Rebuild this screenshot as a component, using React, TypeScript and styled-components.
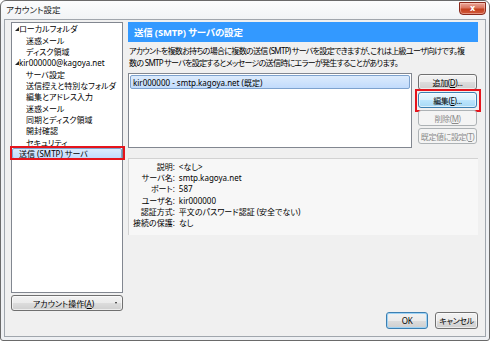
import React from "react";
import styled, { createGlobalStyle, css } from "styled-components";

const GlobalStyle = createGlobalStyle`
  html, body { margin: 0; padding: 0; background: #ffffff; }
  body {
    font-family: "Noto Sans", "Noto Sans CJK JP", sans-serif;
    font-size: 8px;
    font-feature-settings: "palt";
    color: #000;
  }
  * { box-sizing: border-box; }
`;

const Window = styled.div`
  width: 490px;
  height: 341px;
  border: 1px solid #6a6a6a;
  border-radius: 6px 6px 3px 3px;
  background: linear-gradient(#fbfcfd, #eef0f3 24px, #eef0f3);
  display: flex;
  flex-direction: column;
`;

const TitleBar = styled.div`
  height: 18px;
  display: flex;
  align-items: flex-start;
  padding: 0 3px 0 5px;
`;

const Title = styled.div`
  flex: 1;
  margin-top: 3px;
  font-size: 8.5px;
  line-height: 11px;
  color: #1a1a1a;
`;

const CloseButton = styled.div`
  width: 27px;
  height: 13px;
  margin-top: 1px;
  border: 1px solid #8a2a1c;
  border-radius: 0 0 4px 4px;
  background: linear-gradient(#eca799 0%, #d9745f 45%, #c4401f 55%, #d25a3c 100%);
  box-shadow: inset 0 0 0 1px rgba(255, 220, 210, 0.45);
  display: flex;
  align-items: center;
  justify-content: center;
  color: #fff;
  font-family: "DejaVu Sans", sans-serif;
  font-weight: bold;
  font-size: 8px;
  line-height: 1;
`;

const Client = styled.div`
  flex: 1;
  margin: 0 3px 3px 3px;
  border: 1px solid #a0a6ad;
  background: #f0f0f0;
  display: flex;
  flex-direction: column;
  padding: 2px 6px 6px 6px;
`;

const Main = styled.div`
  height: 289px;
  display: flex;
  gap: 5px;
`;

const LeftColumn = styled.div`
  width: 112px;
  flex: none;
  display: flex;
  flex-direction: column;
  gap: 2px;
`;

const Tree = styled.div`
  flex: 1;
  border: 1px solid #828790;
  background: #fff;
`;

const TreeRow = styled.div<{ $level: number; $selected?: boolean }>`
  height: 11.36px;
  display: flex;
  align-items: center;
  white-space: nowrap;
  padding-left: ${(p) => (p.$level === 0 ? 7 : 14)}px;
  position: relative;
  ${(p) =>
    p.$selected &&
    css`
      border: 1px solid #7da2ce;
      border-radius: 2px;
      background: linear-gradient(#dcebfc, #c1dbfc);
      padding-left: 6px;
      &::after {
        content: "";
        position: absolute;
        top: -3px;
        left: -3px;
        right: -4px;
        bottom: -2px;
        border: 2px solid #e5141c;
      }
    `}
`;

const Twisty = styled.svg`
  width: 4px;
  height: 4px;
  margin-left: -4px;
  flex: none;
`;

const AccountButton = styled.button`
  height: 16px;
  width: 100%;
  font: inherit;
  font-size: 8px;
  color: #000;
  border: 1px solid #707070;
  border-radius: 3px;
  background: linear-gradient(#f2f2f2 0%, #ebebeb 50%, #dddddd 50%, #cfcfcf 100%);
  box-shadow: inset 0 0 0 1px rgba(255, 255, 255, 0.6);
  display: flex;
  align-items: center;
  padding: 0 5px 0 0;
`;

const AccountLabel = styled.span`
  flex: 1;
  text-align: center;
`;

const DropMarker = styled.span`
  width: 0;
  height: 0;
  border-left: 1.5px solid transparent;
  border-right: 1.5px solid transparent;
  border-top: 2px solid #222;
`;

const RightColumn = styled.div`
  flex: 1;
  min-width: 0;
  display: flex;
  flex-direction: column;
`;

const Header = styled.div`
  height: 20px;
  margin-right: 1px;
  background: #3399ff;
  color: #fff;
  font-weight: bold;
  font-size: 9.5px;
  letter-spacing: -0.2px;
  display: flex;
  align-items: center;
  padding-left: 6px;
  white-space: nowrap;
`;

const Description = styled.div`
  margin-top: 3px;
  padding-left: 1px;
  line-height: 12px;
  letter-spacing: -0.7px;
  white-space: nowrap;
`;

const ServerRow = styled.div`
  margin-top: 4px;
  height: 75px;
  display: flex;
  gap: 6px;
`;

const ServerList = styled.div`
  flex: 1;
  border: 1px solid #828790;
  background: #fff;
  padding: 1px;
`;

const ServerItem = styled.div`
  height: 14px;
  border: 1px solid #7da2ce;
  border-radius: 2px;
  background: linear-gradient(#dcebfc, #c1dbfc);
  padding-left: 2px;
  display: flex;
  align-items: center;
  white-space: nowrap;
`;

const ButtonColumn = styled.div`
  width: 59px;
  flex: none;
  margin-right: 2px;
  padding-top: 1px;
  display: flex;
  flex-direction: column;
  gap: 2px;
`;

type BtnState = "normal" | "hover" | "disabled" | "default";

const Button = styled.button<{ $state?: BtnState; $marked?: boolean; $width?: number }>`
  height: ${(p) => (p.$width ? 17 : 16)}px;
  width: ${(p) => (p.$width ? `${p.$width}px` : "100%")};
  font: inherit;
  font-size: 8px;
  letter-spacing: -0.4px;
  color: #000;
  padding: 0;
  border: 1px solid #707070;
  border-radius: 3px;
  background: linear-gradient(#f2f2f2 0%, #ebebeb 50%, #dddddd 50%, #cfcfcf 100%);
  box-shadow: inset 0 0 0 1px rgba(255, 255, 255, 0.6);
  white-space: nowrap;
  position: relative;
  ${(p) =>
    p.$state === "hover" &&
    css`
      border-color: #3c7fb1;
      background: linear-gradient(#eaf6fd 0%, #d9f0fc 50%, #bee6fd 50%, #a7d9f5 100%);
    `}
  ${(p) =>
    p.$state === "disabled" &&
    css`
      border-color: #adb2b5;
      background: #f4f4f4;
      color: #8b8b8b;
      box-shadow: none;
    `}
  ${(p) =>
    p.$state === "default" &&
    css`
      border-color: #3c7fb1;
      box-shadow: inset 0 0 0 1px #9fd3f5;
    `}
  ${(p) =>
    p.$marked &&
    css`
      &::after {
        content: "";
        position: absolute;
        top: -4px;
        left: -4px;
        right: -5px;
        bottom: -5px;
        border: 2px solid #e5141c;
      }
    `}
`;

const Details = styled.div`
  margin-top: 10px;
  margin-right: 1px;
  border-top: 1px solid #d2d2d2;
  border-left: 1px solid #d2d2d2;
  background: #f7f7f7;
  padding: 2px 0 7px 4px;
  display: grid;
  grid-template-columns: auto 1fr;
  column-gap: 4px;
  line-height: 11.2px;
`;

const DetailLabel = styled.div`
  text-align: right;
  white-space: nowrap;
`;

const DetailValue = styled.div`
  white-space: nowrap;
`;

const Footer = styled.div`
  margin-top: 1px;
  padding-right: 1px;
  display: flex;
  justify-content: flex-end;
  gap: 7px;
`;

const treeItems: { label: string; level: number; twisty?: boolean; selected?: boolean }[] = [
  { label: "ローカルフォルダ", level: 0, twisty: true },
  { label: "迷惑メール", level: 1 },
  { label: "ディスク領域", level: 1 },
  { label: "kir000000@kagoya.net", level: 0, twisty: true },
  { label: "サーバ設定", level: 1 },
  { label: "送信控えと特別なフォルダ", level: 1 },
  { label: "編集とアドレス入力", level: 1 },
  { label: "迷惑メール", level: 1 },
  { label: "同期とディスク領域", level: 1 },
  { label: "開封確認", level: 1 },
  { label: "セキュリティ", level: 1 },
  { label: "送信 (SMTP) サーバ", level: 0, selected: true },
];

const details: [string, string][] = [
  ["説明:", "<なし>"],
  ["サーバ名:", "smtp.kagoya.net"],
  ["ポート:", "587"],
  ["ユーザ名:", "kir000000"],
  ["認証方式:", "平文のパスワード認証 (安全でない)"],
  ["接続の保護:", "なし"],
];

export default function App() {
  return (
    <>
      <GlobalStyle />
      <Window>
        <TitleBar>
          <Title>アカウント設定</Title>
          <CloseButton>x</CloseButton>
        </TitleBar>
        <Client>
          <Main>
            <LeftColumn>
              <Tree>
                {treeItems.map((it, i) => (
                  <TreeRow key={i} $level={it.level} $selected={it.selected}>
                    {it.twisty && (
                      <Twisty viewBox="0 0 4 4">
                        <polygon points="4,0 4,4 0,4" fill="#262626" />
                      </Twisty>
                    )}
                    {it.label}
                  </TreeRow>
                ))}
              </Tree>
              <AccountButton>
                <AccountLabel>
                  アカウント操作(<u>A</u>)
                </AccountLabel>
                <DropMarker />
              </AccountButton>
            </LeftColumn>
            <RightColumn>
              <Header>送信 (SMTP) サーバの設定</Header>
              <Description>
                アカウントを複数お持ちの場合に複数の送信 (SMTP) サーバを設定できますが、これは上級ユーザ向けです。複
                <br />
                数の SMTP サーバを設定するとメッセージの送信時にエラーが発生することがあります。
              </Description>
              <ServerRow>
                <ServerList>
                  <ServerItem>kir000000 - smtp.kagoya.net (既定)</ServerItem>
                </ServerList>
                <ButtonColumn>
                  <Button>
                    追加(<u>D</u>)...
                  </Button>
                  <Button $state="hover" $marked>
                    編集(<u>E</u>)...
                  </Button>
                  <Button $state="disabled">
                    削除(<u>M</u>)
                  </Button>
                  <Button $state="disabled">
                    既定値に設定(<u>T</u>)
                  </Button>
                </ButtonColumn>
              </ServerRow>
              <Details>
                {details.map(([k, v]) => (
                  <React.Fragment key={k}>
                    <DetailLabel>{k}</DetailLabel>
                    <DetailValue>{v}</DetailValue>
                  </React.Fragment>
                ))}
              </Details>
            </RightColumn>
          </Main>
          <Footer>
            <Button $state="default" $width={42}>
              OK
            </Button>
            <Button $width={43}>キャンセル</Button>
          </Footer>
        </Client>
      </Window>
    </>
  );
}
